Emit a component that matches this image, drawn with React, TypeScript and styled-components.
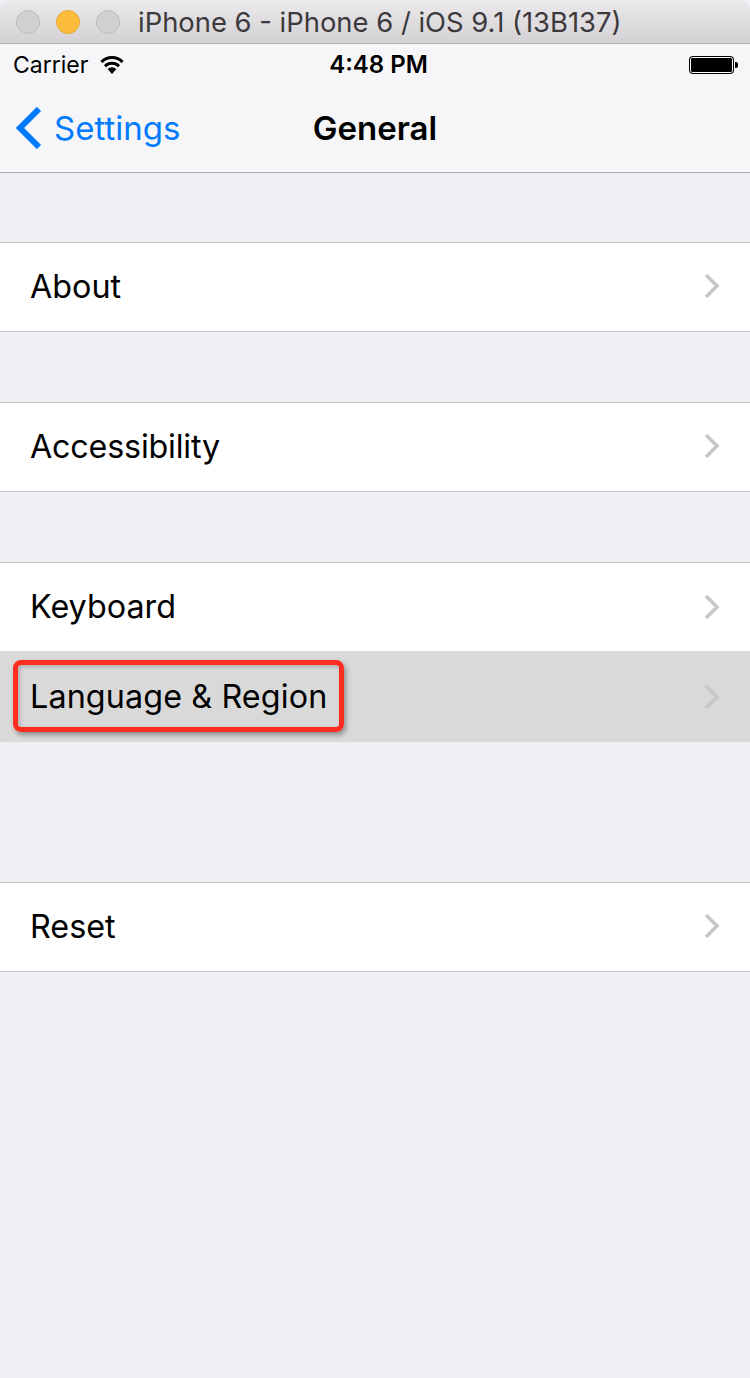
import styled, { createGlobalStyle } from "styled-components";

const Global = createGlobalStyle`
  html, body {
    margin: 0;
    padding: 0;
    background: #efeff4;
  }
  body {
    font-family: "Inter", "Liberation Sans", sans-serif;
    -webkit-font-smoothing: antialiased;
  }
`;

const Screen = styled.div`
  width: 750px;
  height: 1378px;
  background: #efeff4;
  overflow: hidden;
`;

const TitleBar = styled.div`
  height: 44px;
  display: flex;
  align-items: center;
  gap: 16px;
  padding: 0 0 0 16px;
  box-sizing: border-box;
  background: linear-gradient(#ebe9eb, #d3d1d3);
  border-bottom: 1px solid #b2b0b2;
  border-radius: 10px 10px 0 0;
`;

const Light = styled.span<{ $color: string; $edge: string }>`
  width: 24px;
  height: 24px;
  box-sizing: border-box;
  border-radius: 50%;
  background: ${(props) => props.$color};
  border: 1px solid ${(props) => props.$edge};
`;

const WindowTitle = styled.div`
  margin-left: 2px;
  font-size: 27.4px;
  color: #3c393c;
  white-space: nowrap;
`;

const NavArea = styled.div`
  height: 129px;
  box-sizing: border-box;
  background: #f6f6f8;
  border-bottom: 1px solid #adadb0;
`;

const StatusBar = styled.div`
  height: 41px;
  display: grid;
  grid-template-columns: 1fr auto 1fr;
  align-items: center;
  padding: 0 11px 0 13px;
  color: #000;
`;

const Carrier = styled.div`
  display: flex;
  align-items: center;
  gap: 12px;
  font-size: 23px;
`;

const Time = styled.div`
  margin-left: 5px;
  font-size: 24px;
  font-weight: 600;
`;

const Battery = styled.svg`
  justify-self: end;
`;

const NavBar = styled.div`
  height: 87px;
  box-sizing: border-box;
  display: grid;
  grid-template-columns: 1fr auto 1fr;
  align-items: center;
  padding: 0 16px 2px;
`;

const Back = styled.div`
  display: flex;
  align-items: center;
  gap: 12px;
  color: #007aff;
  font-size: 33px;
`;

const NavTitle = styled.div`
  font-size: 33px;
  font-weight: 600;
  color: #000;
`;

const Groups = styled.div`
  display: flex;
  flex-direction: column;
  padding-top: 69px;
`;

const Group = styled.div<{ $gap: number }>`
  margin-bottom: ${(props) => props.$gap}px;
  background: #fff;
  border-top: 1px solid #c8c7cc;
`;

const Row = styled.div<{ $selected?: boolean; $flush?: boolean }>`
  box-sizing: border-box;
  height: ${(props) => (props.$selected ? 91 : props.$flush ? 88 : 89)}px;
  display: flex;
  align-items: center;
  justify-content: space-between;
  padding: 0 29px ${(props) => (props.$selected ? 0 : props.$flush ? 1 : 2)}px 31px;
  background: ${(props) => (props.$selected ? "#d9d9d9" : "#fff")};
  border-bottom: ${(props) => (props.$selected || props.$flush ? "none" : "1px solid #c8c7cc")};
  font-size: 32.3px;
  color: #000;
  position: relative;
`;

const Label = styled.span<{ $spacing?: number }>`
  margin-left: -1px;
  letter-spacing: ${(props) => props.$spacing ?? 0}px;
`;

const Arrow = styled.svg`
  margin-right: 1px;
`;

const Highlight = styled.div`
  position: absolute;
  left: 13px;
  top: 9px;
  width: 331px;
  height: 72px;
  box-sizing: border-box;
  border: 5px solid #ff2d20;
  border-radius: 8px;
  box-shadow: 2px 3px 5px rgba(0, 0, 0, 0.35), inset 2px 2px 4px rgba(0, 0, 0, 0.2);
`;

const Wifi = () => (
  <svg width="24" height="18" viewBox="0 0 24 18">
    <path d="M12 18 L7.6 13 A6.4 6.4 0 0 1 16.4 13 Z" fill="#000" />
    <path d="M5 10.2 A10 10 0 0 1 19 10.2" fill="none" stroke="#000" strokeWidth="3" />
    <path d="M1.4 6 A15 15 0 0 1 22.6 6" fill="none" stroke="#000" strokeWidth="3" />
  </svg>
);

const Chevron = () => (
  <Arrow width="16" height="26" viewBox="0 0 16 26">
    <path d="M2 2 L13 13 L2 24" fill="none" stroke="#c7c7cc" strokeWidth="3.6" />
  </Arrow>
);

const App = () => {
  return (
    <Screen>
      <Global />
      <TitleBar>
        <Light $color="#d2d1d2" $edge="#bdbcbd" />
        <Light $color="#fdbb3c" $edge="#e9a93a" />
        <Light $color="#d2d1d2" $edge="#bdbcbd" />
        <WindowTitle>iPhone 6 - iPhone 6 / iOS 9.1 (13B137)</WindowTitle>
      </TitleBar>
      <NavArea>
        <StatusBar>
          <Carrier>
            Carrier
            <Wifi />
          </Carrier>
          <Time>4:48 PM</Time>
          <Battery width="50" height="20" viewBox="0 0 50 20">
            <rect x="0.5" y="1.5" width="44" height="17" rx="3" fill="#000" stroke="#000" />
            <rect x="1.5" y="2.5" width="42" height="15" rx="2" fill="none" stroke="#fff" />
            <rect x="2.5" y="3.5" width="40" height="13" fill="#000" />
            <path d="M46 7 h1 a2 2 0 0 1 2 2 v2 a2 2 0 0 1 -2 2 h-1 Z" fill="#000" />
          </Battery>
        </StatusBar>
        <NavBar>
          <Back>
            <svg width="26" height="42" viewBox="0 0 26 42">
              <path d="M23 2 L4 21 L23 40" fill="none" stroke="#007aff" strokeWidth="6" />
            </svg>
            Settings
          </Back>
          <NavTitle>General</NavTitle>
        </NavBar>
      </NavArea>
      <Groups>
        <Group $gap={70}>
          <Row>
            <Label>About</Label>
            <Chevron />
          </Row>
        </Group>
        <Group $gap={70}>
          <Row>
            <Label $spacing={-0.2}>Accessibility</Label>
            <Chevron />
          </Row>
        </Group>
        <Group $gap={140}>
          <Row $flush>
            <Label>Keyboard</Label>
            <Chevron />
          </Row>
          <Row $selected>
            <Label $spacing={0.12}>Language &amp; Region</Label>
            <Chevron />
            <Highlight />
          </Row>
        </Group>
        <Group $gap={0}>
          <Row>
            <Label>Reset</Label>
            <Chevron />
          </Row>
        </Group>
      </Groups>
    </Screen>
  );
};

export default App;
